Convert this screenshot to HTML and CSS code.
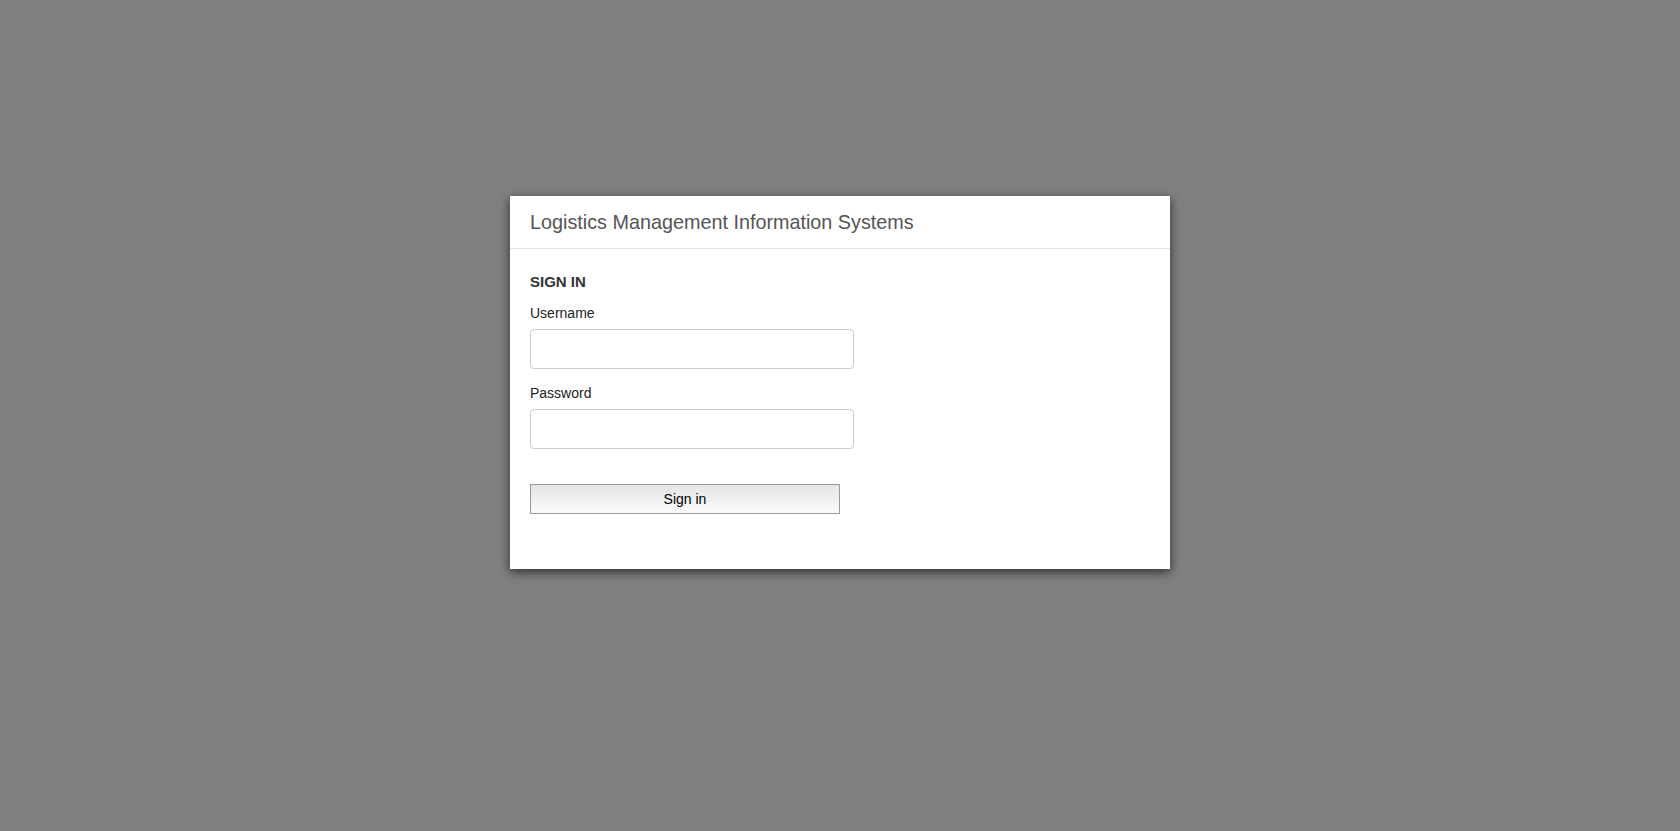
FILE: index.html
```html
<!DOCTYPE html>
<html>
<head>
<meta charset="utf-8">
<title>Sign in</title>
<link rel="stylesheet" href="styles.css">
</head>
<body>
<div class="card">
  <div class="card-header">
    <h1 class="card-title">Logistics Management Information Systems</h1>
  </div>
  <form class="card-body">
    <h2 class="section-title">SIGN IN</h2>
    <label class="field-label first" for="username">Username</label>
    <input class="field-input" id="username" type="text">
    <label class="field-label" for="password">Password</label>
    <input class="field-input" id="password" type="password">
    <button class="submit-btn" type="button">Sign in</button>
  </form>
</div>
</body>
</html>
```
FILE: styles.css
```css
html, body {
  margin: 0;
  padding: 0;
}
body {
  background: #808080;
  font-family: "Liberation Sans", Arial, Helvetica, sans-serif;
  min-height: 831px;
  display: flex;
  justify-content: center;
  align-items: flex-start;
  padding-top: 196px;
  box-sizing: border-box;
}
.card {
  width: 660px;
  background: #fff;
  box-shadow: 0 3px 10px rgba(0, 0, 0, 0.65);
}
.card-header {
  height: 53px;
  box-sizing: border-box;
  border-bottom: 1px solid #e5e5e5;
  padding: 0 20px;
  display: flex;
  align-items: center;
}
.card-title {
  margin: 0;
  font-size: 19.8px;
  line-height: 24px;
  font-weight: normal;
  color: #555;
}
.card-body {
  display: flex;
  flex-direction: column;
  align-items: flex-start;
  padding: 23px 20px 22px;
  margin: 0;
}
.section-title {
  margin: 0;
  font-size: 15px;
  line-height: 20px;
  font-weight: bold;
  color: #333;
}
.field-label {
  display: block;
  font-size: 14px;
  line-height: 20px;
  color: #222;
  margin-top: 14px;
}
.field-label.first {
  margin-top: 11px;
}
.field-input {
  margin-top: 6px;
  width: 324px;
  height: 40px;
  box-sizing: border-box;
  border: 1px solid #ccc;
  border-radius: 4px;
  background: #fff;
  padding: 6px 12px;
  font-size: 14px;
  font-family: inherit;
}
.submit-btn {
  margin-top: 35px;
  margin-bottom: 33px;
  width: 310px;
  height: 30px;
  box-sizing: border-box;
  border: 1px solid #999;
  border-radius: 0;
  background: linear-gradient(to bottom, #e4e4e4, #fbfbfb);
  font-family: inherit;
  font-size: 14px;
  color: #000;
  padding: 0;
}
```
